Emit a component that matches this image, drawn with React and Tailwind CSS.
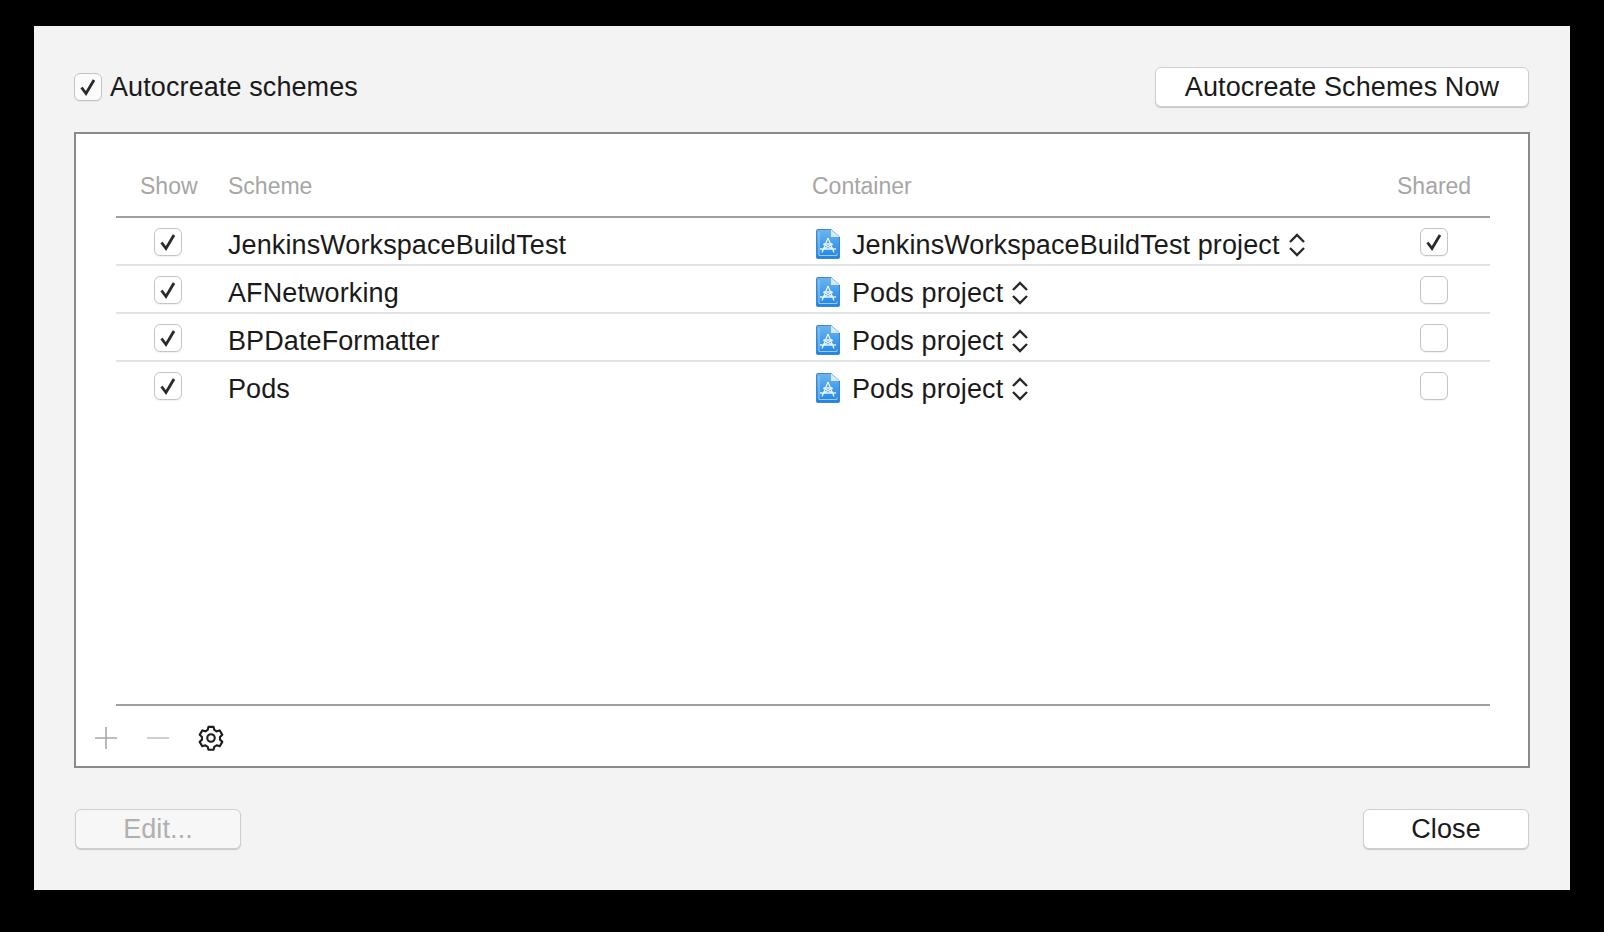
import React from "react";

const Check = ({ checked = true, bg = "bg-white" }) => (
  <div className={`w-[28px] h-[28px] rounded-[6px] border border-[#c4c4c4] ${bg} shadow-[0_1px_1px_rgba(0,0,0,0.06)] flex items-center justify-center shrink-0`}>
    {checked && (
      <svg width="22" height="22" viewBox="0 0 22 22" fill="none">
        <path d="M4.5 11.5 L9 17.5 L17 4" stroke="#2a2a2a" strokeWidth="2.8" fill="none" />
      </svg>
    )}
  </div>
);

const DocIcon = ({ id }) => (
  <svg width="24" height="30" viewBox="0 0 24 30" className="shrink-0 -mt-[3px]">
    <defs>
      <linearGradient id={id} x1="0" y1="0" x2="0" y2="1">
        <stop offset="0" stopColor="#6ab6ef" />
        <stop offset="1" stopColor="#1f84e6" />
      </linearGradient>
    </defs>
    <path d="M0.5 1.5 Q0.5 0.5 1.5 0.5 L15 0.5 L23.5 8 L23.5 28.5 Q23.5 29.5 22.5 29.5 L1.5 29.5 Q0.5 29.5 0.5 28.5 Z" fill={`url(#${id})`} stroke="#3f86cf" />
    <path d="M15 0.5 L15 8 L23.5 8 Z" fill="#d8ebfa" />
    <path d="M3 3 L3 26.5 L21 26.5 L21 24.5" fill="none" stroke="#9acbf2" strokeWidth="1" />
    <g stroke="#e8f4fd" strokeWidth="1.3" fill="none">
      <path d="M12 9 L6 23.5 M12 9 L18 23.5 M4 20 L20 20 M8 15 L16 15 M7 15 L17 20 M17 15 L7 20" />
    </g>
  </svg>
);

const Stepper = () => (
  <svg width="18" height="26" viewBox="0 0 18 26" className="shrink-0 ml-[8px]">
    <path d="M2 10 L9 3 L16 10 M2 16 L9 23 L16 16" fill="none" stroke="#2a2a2a" strokeWidth="2.4" />
  </svg>
);

const Button = ({ children, className = "", disabled = false }) => (
  <div
    className={`h-[40px] pt-[1px] rounded-[6px] border border-[#cfcfcf] flex items-center justify-center shadow-[0_1px_1px_rgba(0,0,0,0.18)] ${disabled ? "bg-[#f7f7f7] text-[#b0b0b0]" : "bg-white text-[#1a1a1a]"} ${className}`}
  >
    {children}
  </div>
);

const rows = [
  { name: "JenkinsWorkspaceBuildTest", container: "JenkinsWorkspaceBuildTest project", shared: true },
  { name: "AFNetworking", container: "Pods project", shared: false },
  { name: "BPDateFormatter", container: "Pods project", shared: false },
  { name: "Pods", container: "Pods project", shared: false },
];

export default function App() {
  return (
    <div className="w-[1604px] h-[932px] bg-black pt-[26px] pl-[34px] overflow-hidden font-['Liberation_Sans',Arial,sans-serif] text-[27px] tracking-[0.1px] text-[#1a1a1a]">
      <div className="w-[1536px] h-[864px] bg-[#f3f3f4] flex flex-col pl-[40px] pr-[40px]">
        <div className="flex items-center justify-between h-[40px] mt-[41px]">
          <div className="flex items-center gap-[8px]">
            <Check bg="bg-[#fbfbfb]" />
            <span className="leading-[30px]">Autocreate schemes</span>
          </div>
          <Button className="w-[374px] mr-[1px]">Autocreate Schemes Now</Button>
        </div>

        <div className="mt-[25px] h-[636px] bg-white border-2 border-[#8a8a8a] flex flex-col">
          <div className="ml-[40px] mr-[38px] flex items-center h-[84px] pt-[22px] border-b-2 border-[#a0a0a0] text-[23px] tracking-normal text-[#a6a6a6] shrink-0">
            <div className="w-[112px] pl-[24px]">Show</div>
            <div className="w-[584px]">Scheme</div>
            <div className="w-[585px]">Container</div>
            <div>Shared</div>
          </div>

          <div className="ml-[40px] mr-[38px] flex-1">
            {rows.map((r, i) => (
              <div key={r.name} className={`flex items-center h-[48px] border-b-2 ${i === rows.length - 1 ? "border-transparent" : "border-[#e3e3e3]"}`}>
                <div className="w-[112px] pl-[38px] mt-[2px]"><Check /></div>
                <div className="w-[584px] mt-[8px]">{r.name}</div>
                <div className="w-[608px] flex items-center pl-[4px] mt-[8px]">
                  <DocIcon id={`doc-${i}`} />
                  <span className="ml-[12px]">{r.container}</span>
                  <Stepper />
                </div>
                <div className="mt-[2px]"><Check checked={r.shared} /></div>
              </div>
            ))}
          </div>

          <div className="h-[62px] shrink-0 flex flex-col">
            <div className="ml-[40px] mr-[38px] border-t-2 border-[#a0a0a0]" />
            <div className="flex-1 flex items-center pl-[18px] pt-[4px] gap-[28px]">
              <svg width="24" height="24" viewBox="0 0 24 24"><path d="M12 1 V23 M1 12 H23" stroke="#a8a8a8" strokeWidth="1.6" /></svg>
              <svg width="24" height="24" viewBox="0 0 24 24"><path d="M1 12 H23" stroke="#c4c4c4" strokeWidth="1.6" /></svg>
              <svg width="28" height="28" viewBox="0 0 24 24" fill="none" stroke="#1c1c1c" strokeWidth="1.8" strokeLinejoin="round" className="-ml-[1px]">
                <path d="M9.8 2.5 h4.4 l.7 2.7 a7.5 7.5 0 0 1 1.9 1.1 l2.7-.8 2.2 3.8-2 1.9 a7.5 7.5 0 0 1 0 2.2 l2 1.9-2.2 3.8-2.7-.8 a7.5 7.5 0 0 1-1.9 1.1 l-.7 2.7 h-4.4 l-.7-2.7 a7.5 7.5 0 0 1-1.9-1.1 l-2.7.8-2.2-3.8 2-1.9 a7.5 7.5 0 0 1 0-2.2 l-2-1.9 2.2-3.8 2.7.8 a7.5 7.5 0 0 1 1.9-1.1 Z" />
                <circle cx="12" cy="12" r="3.2" />
              </svg>
            </div>
          </div>
        </div>

        <div className="flex justify-between mt-[41px]">
          <Button disabled className="w-[166px] ml-[1px]">Edit...</Button>
          <Button className="w-[166px] mr-[1px]">Close</Button>
        </div>
      </div>
    </div>
  );
}
